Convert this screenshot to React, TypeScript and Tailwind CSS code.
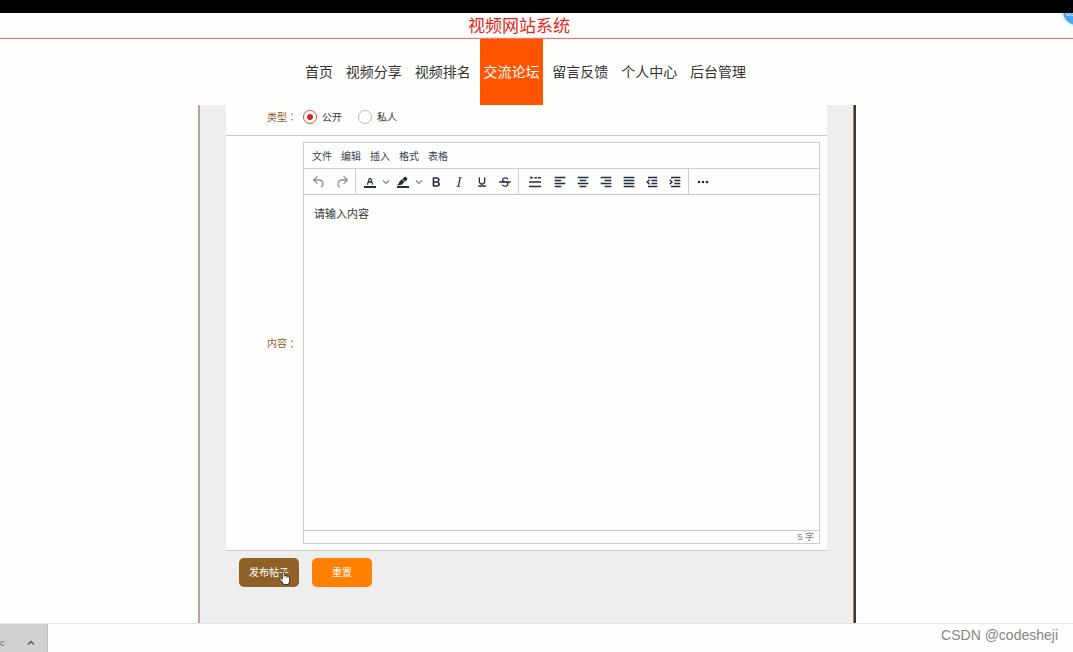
import type { ReactNode } from 'react';

const NAV = ['首页', '视频分享', '视频排名', '交流论坛', '留言反馈', '个人中心', '后台管理'];
const ACTIVE = '交流论坛';
const MENUS = ['文件', '编辑', '插入', '格式', '表格'];

const PATHS = {
  undo: 'M6.4 8H12c3.7 0 6.2 2 6.8 5.1.6 2.7-.4 5.6-2.3 6.8a1 1 0 01-1-1.8c1.1-.6 1.8-2.7 1.4-4.6-.5-2.1-2.1-3.5-4.9-3.5H6.4l3.3 3.3a1 1 0 11-1.4 1.4l-5-5a1 1 0 010-1.4l5-5a1 1 0 011.4 1.4L6.4 8z',
  bar: 'M3 18h18v3H3z',
  letterA:
    'M8.7 16h-.8a.5.5 0 01-.5-.6l2.7-9c.1-.3.3-.4.5-.4h2.8c.2 0 .4.1.5.4l2.7 9a.5.5 0 01-.5.6h-.8a.5.5 0 01-.4-.4l-.7-2.2c0-.3-.3-.4-.5-.4h-3.4c-.2 0-.4.1-.5.4l-.7 2.2c0 .3-.2.4-.4.4zm2.6-7.6l-.6 2a.5.5 0 00.5.6h1.6a.5.5 0 00.5-.6l-.6-2c0-.3-.3-.4-.5-.4h-.4c-.2 0-.4.1-.5.4z',
  marker:
    'M7.7 16.7H3l3.3-3.3-.7-.8L10.2 8l4 4.1-4 4.2c-.2.2-.6.2-.8 0l-.6-.7-1.1 1.1zm5-7.5L11 7.4l3-2.9a2 2 0 012.6 0L18 6c.7.7.7 2 0 2.7l-2.9 2.9-1.8-1.8-.5-.6',
  bold: 'M7.8 19c-.3 0-.5 0-.6-.2l-.2-.5V5.7c0-.2 0-.4.2-.5l.6-.2h5c1.5 0 2.7.3 3.5 1 .7.6 1.1 1.4 1.1 2.5a3 3 0 01-.6 1.9c-.4.6-1 1-1.6 1.2.4.1.9.3 1.3.6s.8.7 1 1.2c.4.4.5 1 .5 1.6 0 1.3-.4 2.3-1.3 3-.8.7-2.1 1-3.8 1H7.8zm5-8.3c.6 0 1.2-.1 1.6-.5.4-.3.6-.7.6-1.3 0-1.1-.8-1.7-2.3-1.7H9.3v3.5h3.4zm.5 6c.7 0 1.3-.1 1.7-.4.4-.4.6-.9.6-1.5s-.2-1-.7-1.4c-.4-.3-1-.4-2-.4H9.4v3.8h4z',
  italic:
    'M16.7 4.7l-.1.9h-.3c-.6 0-1 0-1.4.3-.3.3-.4.6-.5 1.1l-2.1 9.8v.6c0 .5.4.8 1.4.8h.2l-.2.8H8l.2-.8h.2c1.1 0 1.8-.5 2-1.5l2-9.8.1-.5c0-.6-.4-.8-1.4-.8h-.3l.2-.9h5.8z',
  underline:
    'M16 5c.6 0 1 .4 1 1v5.5a4 4 0 01-.4 1.8l-1 1.4a5.3 5.3 0 01-5.5 1 5 5 0 01-1.6-1c-.5-.4-.8-.9-1.1-1.4a4 4 0 01-.4-1.8V6c0-.6.4-1 1-1s1 .4 1 1v5.5c0 .3 0 .6.2 1l.6.7a3.3 3.3 0 002.2.8 3.4 3.4 0 002.2-.8c.3-.2.4-.5.6-.8l.2-.9V6c0-.6.4-1 1-1zM7 17h10c.6 0 1 .4 1 1s-.4 1-1 1H7a1 1 0 010-2z',
  strike:
    'M15.6 8.5c-.5-.7-1-1.1-1.3-1.3-.6-.4-1.3-.6-2-.6-2.7 0-2.8 1.7-2.8 2.1 0 1.6 1.8 2 3.2 2.3 4.4.9 4.6 2.8 4.6 3.9 0 1.4-.7 4.1-5 4.1A6.2 6.2 0 017 16.4l1.5-1.1c.4.6 1.6 2 3.7 2 1.6 0 2.5-.4 3-1.2.4-.8.3-2-.8-2.6-.7-.4-1.6-.7-2.9-1-1-.2-3.9-.8-3.9-3.6C7.6 6 10.3 5 12.4 5c2.9 0 4.2 1.6 4.7 2.4l-1.5 1.1zM4 11h16a1 1 0 010 2H4a1 1 0 010-2z',
  lineHeight: 'M5 3l4.500 2.500L5 8zM11 4.500h4v2.200h-4zM16.500 4.500H21v2.200h-4.500zM3 11h18v2.200H3zM3 17.500h18v2.200H3z',
  left: 'M4 4h16v2.500H4zM4 8.500h10v2.500H4zM4 13h16v2.500H4zM4 17.500h10v2.500H4z',
  center: 'M4 4h16v2.500H4zM7 8.500h10v2.500H7zM4 13h16v2.500H4zM7 17.500h10v2.500H7z',
  right: 'M4 4h16v2.500H4zM10 8.500h10v2.500H10zM4 13h16v2.500H4zM10 17.500h10v2.500H10z',
  justify: 'M4 4h16v2.500H4zM4 8.500h16v2.500H4zM4 13h16v2.500H4zM4 17.500h16v2.500H4z',
  outdent:
    'M6 4h14v2.500H6zM11 8.500h9v2.500h-9zM11 13h9v2.500h-9zM6 17.500h14v2.500H6zM7.500 7.800l1.500 1.500-2.700 2.700L9 14.700l-1.500 1.500L3.300 12z',
  indent:
    'M6 4h14v2.500H6zM11 8.500h9v2.500h-9zM11 13h9v2.500h-9zM6 17.500h14v2.500H6zM4.800 7.800L3.300 9.300 6 12l-2.700 2.700 1.500 1.500L9 12z',
  more: 'M6 10a2 2 0 110 4 2 2 0 010-4zM12 10a2 2 0 110 4 2 2 0 010-4zM18 10a2 2 0 110 4 2 2 0 010-4z',
};

function Icon({ d, flip = false }: { d: string; flip?: boolean }) {
  return (
    <svg viewBox="0 0 24 24" className={flip ? 'size-4 -scale-x-100' : 'size-4'} fill="currentColor" aria-hidden="true">
      <path d={d} />
    </svg>
  );
}

function Tool({ label, children, wide = false, muted = false }: { label: string; children: ReactNode; wide?: boolean; muted?: boolean }) {
  return (
    <button
      type="button"
      aria-label={label}
      className={`flex h-full items-center justify-center ${wide ? 'w-[27px]' : 'w-[23px]'} ${muted ? 'text-[#8d939b]' : 'text-[#222f3e]'}`}
    >
      {children}
    </button>
  );
}

function Caret({ label }: { label: string }) {
  return (
    <button type="button" aria-label={label} className="flex h-full w-[10px] items-center justify-center text-[#7c838c]">
      <svg viewBox="0 0 8 8" className="size-2 shrink-0" fill="none" stroke="currentColor" strokeWidth="1.1" aria-hidden="true">
        <path d="M1 2.500l3 3 3-3" />
      </svg>
    </button>
  );
}

function Group({ children, last = false }: { children: ReactNode; last?: boolean }) {
  return <div className={`flex h-full px-[2px] ${last ? '' : 'border-r border-[#cccccc]'}`}>{children}</div>;
}

function Colon() {
  return <span className="font-['Noto_Sans_CJK_TC',sans-serif]">：</span>;
}

function Radio({ label, checked = false }: { label: string; checked?: boolean }) {
  return (
    <label className="flex items-center gap-[5px] text-[10px] text-[#333333]">
      <input
        type="radio"
        name="visibility"
        defaultChecked={checked}
        className="size-[14px] appearance-none rounded-full border border-[#b8b8b8] bg-white checked:border-[#c9534a] checked:bg-[radial-gradient(circle,#e02010_0_2.500px,#ffffff_3.500px)]"
      />
      {label}
    </label>
  );
}

export default function App() {
  return (
    <div className="flex min-h-screen flex-col bg-[#fefefd] font-['Liberation_Sans','Noto_Sans_CJK_SC',sans-serif]">
      <div className="h-[13px] bg-black" />
      <header className="relative overflow-hidden border-b border-b-[#ea7a72]">
        <h1 className="border-b border-b-[#f4e4e2] pt-1 pr-[35px] text-center text-[17px] leading-5 text-[#e0281a]">视频网站系统</h1>
        <div className="absolute -top-[17px] -right-[19px] flex size-[31px] justify-start rounded-full border-2 border-[#e4eef6] bg-[#45a9f5] pt-[12px] pl-[3px] text-[8px] leading-[8px] text-white">
          03
        </div>
      </header>
      <nav className="flex justify-center pr-[22px]">
        <ul className="flex w-[448px] justify-between text-[14px]">
          {NAV.map((item) => (
            <li key={item}>
              <a
                href="#"
                className={`flex h-[66px] items-center justify-center whitespace-nowrap ${item.length === 2 ? 'w-[35px]' : 'w-[63px]'} ${
                  item === ACTIVE ? 'bg-[#ff5400] text-white' : 'text-[#333333]'
                }`}
              >
                {item}
              </a>
            </li>
          ))}
        </ul>
      </nav>
      <main className="flex flex-1 justify-center pr-[19px]">
        <div className="flex w-[658px] border-l-2 border-[#b8a498] bg-[#eeeeee]">
          <form className="flex flex-1 flex-col pr-[26px] pl-[26px]">
            <div className="flex h-[31px] items-center border-b border-[#c8c8c8] bg-[#fefefd] pb-[6px]">
              <span className="w-[77px] pl-[41px] text-[10px] leading-[22px] text-[#8b5e2a]">
                类型
                <Colon />
              </span>
              <div className="flex gap-4">
                <Radio label="公开" checked />
                <Radio label="私人" />
              </div>
            </div>
            <div className="flex flex-1 items-stretch border-b border-[#c8c8c8] bg-[#fefefd] py-[6px] pr-[7px]">
              <label htmlFor="content" className="flex w-[77px] items-center pl-[41px] text-[10px] text-[#8b5e2a]">
                内容
                <Colon />
              </label>
              <div className="flex flex-1 flex-col border border-[#cccccc]">
                <div className="flex h-[26px] items-center gap-[9px] border-b border-[#cccccc] pt-px pl-2 text-[10px] text-[#364252]">
                  {MENUS.map((m) => (
                    <button type="button" key={m} className="whitespace-nowrap">
                      {m}
                    </button>
                  ))}
                </div>
                <div className="flex h-[26px] border-b border-[#cccccc] pl-px">
                  <Group>
                    <Tool label="撤销" muted>
                      <Icon d={PATHS.undo} />
                    </Tool>
                    <Tool label="重做" muted>
                      <Icon d={PATHS.undo} flip />
                    </Tool>
                  </Group>
                  <Group>
                    <Tool label="文字颜色">
                      <Icon d={PATHS.bar + PATHS.letterA} />
                    </Tool>
                    <Caret label="选择文字颜色" />
                    <Tool label="背景颜色">
                      <Icon d={PATHS.bar + PATHS.marker} />
                    </Tool>
                    <Caret label="选择背景颜色" />
                    <Tool label="粗体">
                      <Icon d={PATHS.bold} />
                    </Tool>
                    <Tool label="斜体">
                      <Icon d={PATHS.italic} />
                    </Tool>
                    <Tool label="下划线">
                      <Icon d={PATHS.underline} />
                    </Tool>
                    <Tool label="删除线">
                      <Icon d={PATHS.strike} />
                    </Tool>
                  </Group>
                  <Group>
                    <Tool label="行高" wide>
                      <Icon d={PATHS.lineHeight} />
                    </Tool>
                    <Tool label="左对齐">
                      <Icon d={PATHS.left} />
                    </Tool>
                    <Tool label="居中">
                      <Icon d={PATHS.center} />
                    </Tool>
                    <Tool label="右对齐">
                      <Icon d={PATHS.right} />
                    </Tool>
                    <Tool label="两端对齐">
                      <Icon d={PATHS.justify} />
                    </Tool>
                    <Tool label="减少缩进">
                      <Icon d={PATHS.outdent} />
                    </Tool>
                    <Tool label="增加缩进">
                      <Icon d={PATHS.indent} />
                    </Tool>
                  </Group>
                  <Group last>
                    <Tool label="更多">
                      <Icon d={PATHS.more} />
                    </Tool>
                  </Group>
                </div>
                <textarea
                  id="content"
                  defaultValue="请输入内容"
                  className="w-full flex-1 resize-none px-[10px] py-[11px] text-[11px] leading-4 text-[#333333] outline-none"
                />
                <div className="border-t border-[#cccccc] pr-[5px] text-right text-[9px] leading-[12px] text-[#7a828c]">5 字</div>
              </div>
            </div>
            <div className="flex h-[72px] gap-[13px] pt-[7px] pl-[13px] text-[10px] text-white">
              <button type="submit" className="relative h-[29px] w-[60px] rounded-[5px] bg-[#8f6126]">
                发布帖子
                <svg viewBox="0 0 12 16" className="absolute top-3 left-10 h-4 w-3" fill="#ffffff" stroke="#222222" strokeWidth="0.9" strokeLinejoin="round" aria-hidden="true">
                  <path d="M3.600 1.500c.9-.7 1.700 0 1.700.8v3.400c.4-.5 1.500-.4 1.800.3.500-.5 1.500-.2 1.700.5.700-.4 1.800-.1 1.800 1v3.300c0 1.500-.9 2.200-1.100 3.700H4.400C4.200 12.900 1.900 11 .9 9.300c-.5-1 .6-1.700 1.400-1l1 1V2.200c0-.3.1-.5.3-.7z" />
                  <path d="M5.300 5.700v2M7.100 6v1.800M8.800 6.500v1.500" strokeWidth="0.5" />
                </svg>
              </button>
              <button type="reset" className="h-[29px] w-[60px] rounded-[5px] bg-[#ff8000]">
                重置
              </button>
            </div>
          </form>
          <div className="w-[3px] border-l border-[#a08468] bg-[#45362f]" />
        </div>
      </main>
      <footer className="flex h-[29px] items-stretch justify-between border-t border-[#e4e4e4]">
        <div className="flex w-12 items-end justify-between border-r border-[#bdbdbd] bg-[#d0d0d0] pr-3 pb-[3px] text-[9px] leading-[12px] text-[#666666]">
          <span>c</span>
          <svg viewBox="0 0 8 8" className="mb-[2px] size-2" fill="none" stroke="#555555" strokeWidth="1.300" aria-hidden="true">
            <path d="M1 5.500l3-3 3 3" />
          </svg>
        </div>
        <p className="pr-[15px] text-[14px] leading-[22px] text-[#858585]">CSDN @codesheji</p>
      </footer>
    </div>
  );
}
